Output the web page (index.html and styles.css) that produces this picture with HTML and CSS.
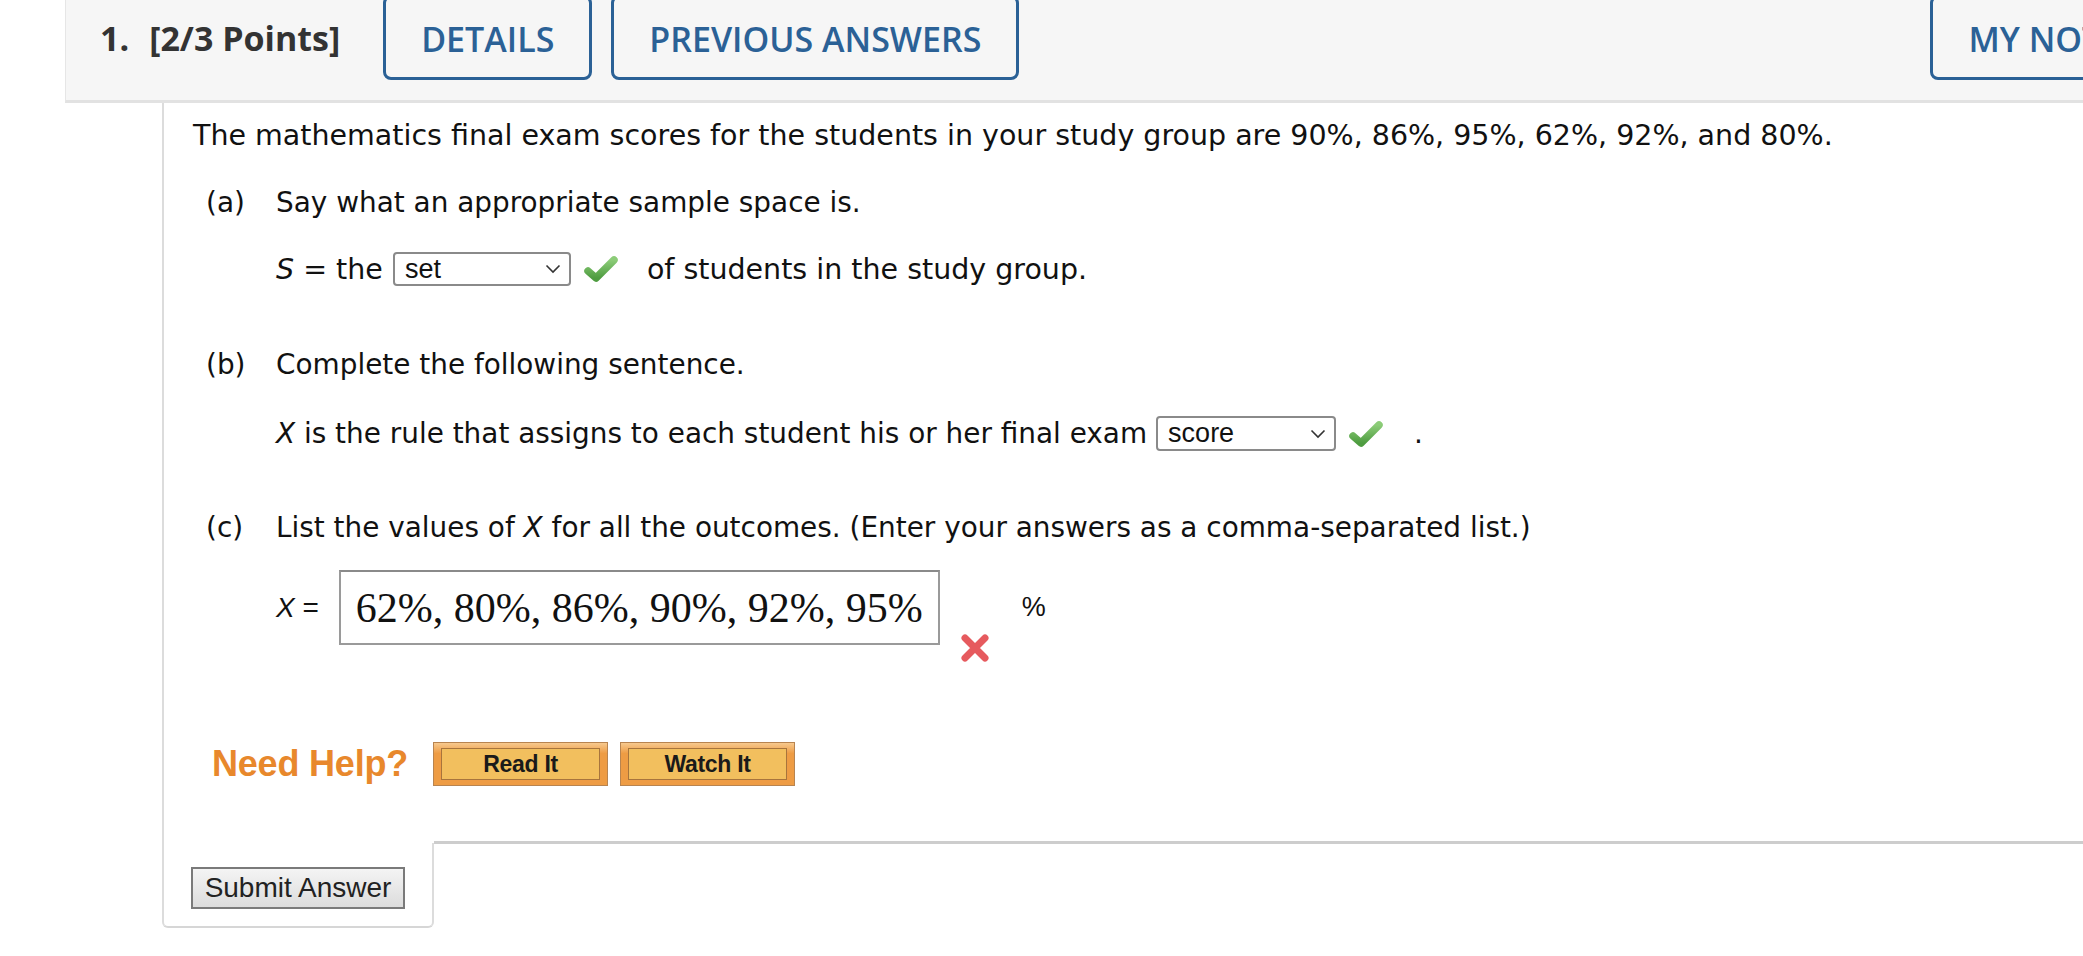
FILE: index.html
```html
<!DOCTYPE html>
<html>
<head>
<meta charset="utf-8">
<link rel="stylesheet" href="styles.css">
</head>
<body>
<div class="page">
  <div class="header">
    <div class="qtitle"><span class="qnum">1.</span>[2/3 Points]</div>
    <div class="hbtn">DETAILS</div>
    <div class="hbtn">PREVIOUS ANSWERS</div>
    <div class="hbtn notes">MY NOTES</div>
  </div>
  <div class="question">
    <p class="intro">The mathematics final exam scores for the students in your study group are 90%, 86%, 95%, 62%, 92%, and 80%.</p>

    <div class="part part-a">
      <div class="plabel"><span class="lbl">(a)</span>Say what an appropriate sample space is.</div>
      <div class="answer ans-a">
        <span class="txt"><i>S</i> = the</span>
        <span class="sel"><span class="selval">set</span><svg class="chev" width="16" height="10" viewBox="0 0 16 10"><path d="M1.5 1.5 L8 8 L14.5 1.5" fill="none" stroke="#333" stroke-width="1.6"/></svg></span>
        <svg class="check" width="36" height="30" viewBox="0 0 36 30"><defs><linearGradient id="g1" x1="0" y1="0" x2="0" y2="1"><stop offset="0" stop-color="#8ccc78"/><stop offset="1" stop-color="#4e9c40"/></linearGradient></defs><path d="M5 17 L13 24 L31 6" fill="none" stroke="url(#g1)" stroke-width="7.5" stroke-linecap="round" stroke-linejoin="round"/></svg>
        <span class="txt after-a">of students in the study group.</span>
      </div>
    </div>

    <div class="part part-b">
      <div class="plabel"><span class="lbl">(b)</span>Complete the following sentence.</div>
      <div class="answer ans-b">
        <span class="txt"><i>X</i> is the rule that assigns to each student his or her final exam</span>
        <span class="sel"><span class="selval">score</span><svg class="chev" width="16" height="10" viewBox="0 0 16 10"><path d="M1.5 1.5 L8 8 L14.5 1.5" fill="none" stroke="#333" stroke-width="1.6"/></svg></span>
        <svg class="check" width="36" height="30" viewBox="0 0 36 30"><defs><linearGradient id="g2" x1="0" y1="0" x2="0" y2="1"><stop offset="0" stop-color="#8ccc78"/><stop offset="1" stop-color="#4e9c40"/></linearGradient></defs><path d="M5 17 L13 24 L31 6" fill="none" stroke="url(#g2)" stroke-width="7.5" stroke-linecap="round" stroke-linejoin="round"/></svg>
        <span class="txt dot">.</span>
      </div>
    </div>

    <div class="part part-c">
      <div class="plabel"><span class="lbl">(c)</span>List the values of <i>X</i> for all the outcomes. (Enter your answers as a comma-separated list.)</div>
      <div class="answer ans-c">
        <span class="txt xeq"><i>X</i> =</span>
        <span class="inbox">62%, 80%, 86%, 90%, 92%, 95%</span>
        <svg class="xmark" width="34" height="30" viewBox="0 0 34 30"><path d="M7 5 L27 25 M27 5 L7 25" fill="none" stroke="#e65a5e" stroke-width="7" stroke-linecap="round"/></svg>
        <span class="txt pct">%</span>
      </div>
    </div>

    <div class="help">
      <span class="needhelp">Need Help?</span>
      <span class="hbutton"><span class="hinner">Read It</span></span>
      <span class="hbutton"><span class="hinner">Watch It</span></span>
    </div>
  </div>
  <div class="footer">
    <div class="submit-tab"><span class="submit">Submit Answer</span></div>
    <div class="footer-rest"></div>
  </div>
</div>
</body>
</html>
```

FILE: styles.css
```css
html, body {
  margin: 0;
  padding: 0;
  background: #ffffff;
  overflow: hidden;
}
.page {
  width: 2083px;
  height: 956px;
  overflow: hidden;
  font-family: "DejaVu Sans", Verdana, sans-serif;
  color: #111;
}
.header {
  margin-left: 65px;
  height: 100px;
  background: #f6f6f6;
  border-bottom: 3px solid #e2e2e2;
  border-left: 1px solid #e6e6e6;
  display: flex;
  align-items: flex-start;
  overflow: hidden;
  font-family: "Open Sans", sans-serif;
}
.qtitle {
  font-weight: 700;
  font-size: 34px;
  color: #333;
  margin-left: 34px;
  margin-top: 15px;
  line-height: 46px;
  white-space: nowrap;
}
.qnum {
  margin-right: 20px;
}
.hbtn {
  margin-top: -5px;
  height: 76px;
  border: 3px solid #2b6196;
  border-radius: 8px;
  padding: 3px 35px 0;
  font-size: 34px;
  font-weight: 600;
  color: #2b6196;
  display: flex;
  align-items: center;
  box-sizing: content-box;
  white-space: nowrap;
  flex-shrink: 0;
}
.hbtn:nth-child(2) {
  margin-left: 43px;
}
.hbtn + .hbtn {
  margin-left: 19px;
}
.hbtn.notes {
  margin-left: auto;
  margin-right: -94px;
}
.question {
  margin-left: 162px;
  border-left: 2px solid #dcdcdc;
  padding-left: 29px;
  padding-top: 17px;
  height: 740px;
  box-sizing: border-box;
}
.intro {
  margin: 0;
  font-size: 28.5px;
  line-height: 32px;
  white-space: nowrap;
}
.part {
  font-size: 27.9px;
}
.plabel {
  line-height: 32px;
  margin-left: 13px;
  white-space: nowrap;
}
.lbl {
  display: inline-block;
  width: 70px;
}
.answer {
  display: flex;
  align-items: center;
  margin-left: 83px;
  white-space: nowrap;
}
.part-a { margin-top: 35px; }
.ans-a { margin-top: 33px; height: 34px; font-size: 28.5px; }
.part-b { margin-top: 63px; }
.ans-b { margin-top: 35px; height: 35px; }
.part-c { margin-top: 61px; }
.ans-c { margin-top: 26px; height: 75px; }
.sel {
  display: inline-flex;
  align-items: center;
  justify-content: space-between;
  box-sizing: border-box;
  width: 178px;
  height: 34px;
  border: 2px solid #8a8a8a;
  border-radius: 4px;
  background: #fff;
  margin-left: 10px;
  padding: 0 8px 0 10px;
  font-family: "Liberation Sans", Arial, sans-serif;
  font-size: 27px;
  color: #111;
}
.ans-b .sel {
  width: 180px;
  height: 35px;
  margin-left: 9px;
}
.check {
  margin-left: 12px;
}
.after-a {
  margin-left: 28px;
}
.dot {
  margin-left: 30px;
}
.xeq {
  font-family: "Liberation Sans", Arial, sans-serif;
  font-size: 28px;
}
.inbox {
  box-sizing: border-box;
  height: 75px;
  width: 601px;
  margin-left: 20px;
  border: 2px solid #9a9a9a;
  border-top-color: #8a8a8a;
  background: #fff;
  display: inline-flex;
  align-items: center;
  padding-left: 15px;
  font-family: "Liberation Serif", "Times New Roman", serif;
  font-size: 42px;
  color: #111;
}
.xmark {
  align-self: flex-end;
  margin-left: 18px;
  margin-bottom: -18px;
}
.pct {
  margin-left: 30px;
  font-family: "Liberation Sans", Arial, sans-serif;
  font-size: 27px;
}
.help {
  display: flex;
  align-items: center;
  margin-top: 97px;
  margin-left: 19px;
}
.needhelp {
  font-family: "Liberation Sans", Arial, sans-serif;
  font-weight: 700;
  font-size: 36px;
  color: #e8882c;
  letter-spacing: -0.2px;
  margin-right: 25px;
}
.hbutton {
  box-sizing: border-box;
  width: 175px;
  height: 44px;
  border: 1px solid #b88450;
  background: linear-gradient(#f7c98e, #ee9c44 25%, #ee9c44);
  display: flex;
  align-items: center;
  justify-content: center;
  padding: 5px 7px;
}
.hbutton + .hbutton {
  margin-left: 12px;
}
.hinner {
  flex: 1;
  height: 100%;
  box-sizing: border-box;
  border: 1px solid #a8743c;
  background: #f2bf5e;
  display: flex;
  align-items: center;
  justify-content: center;
  font-family: "Liberation Sans", Arial, sans-serif;
  font-weight: 700;
  font-size: 23px;
  letter-spacing: -0.3px;
  color: #1a1a1a;
}
.footer {
  display: flex;
  align-items: flex-start;
}
.submit-tab {
  margin-left: 162px;
  width: 272px;
  height: 85px;
  box-sizing: border-box;
  border-left: 2px solid #dcdcdc;
  border-right: 2px solid #dcdcdc;
  border-bottom: 2px solid #d6d6d6;
  border-radius: 0 0 6px 6px;
  padding-top: 24px;
  padding-left: 27px;
}
.submit {
  display: inline-flex;
  align-items: center;
  justify-content: center;
  box-sizing: border-box;
  width: 214px;
  height: 42px;
  border: 2px solid #7a7a7a;
  background: linear-gradient(#f4f4f4, #dcdcdc);
  font-family: "Liberation Sans", Arial, sans-serif;
  font-size: 28px;
  color: #222;
}
.footer-rest {
  flex: 1;
  border-top: 3px solid #cdcdcd;
  margin-top: -2px;
}
```
